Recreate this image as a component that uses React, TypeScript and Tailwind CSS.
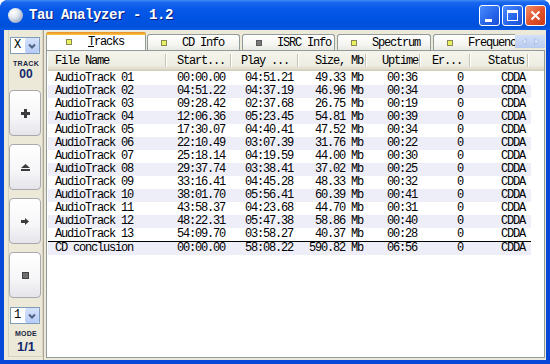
import React from "react";

const rows: [string, string, string, string, string][] = [
  ["AudioTrack 01", "00:00.00", "04:51.21", "49.33 Mb", "00:36"],
  ["AudioTrack 02", "04:51.22", "04:37.19", "46.96 Mb", "00:34"],
  ["AudioTrack 03", "09:28.42", "02:37.68", "26.75 Mb", "00:19"],
  ["AudioTrack 04", "12:06.36", "05:23.45", "54.81 Mb", "00:39"],
  ["AudioTrack 05", "17:30.07", "04:40.41", "47.52 Mb", "00:34"],
  ["AudioTrack 06", "22:10.49", "03:07.39", "31.76 Mb", "00:22"],
  ["AudioTrack 07", "25:18.14", "04:19.59", "44.00 Mb", "00:30"],
  ["AudioTrack 08", "29:37.74", "03:38.41", "37.02 Mb", "00:25"],
  ["AudioTrack 09", "33:16.41", "04:45.28", "48.33 Mb", "00:32"],
  ["AudioTrack 10", "38:01.70", "05:56.41", "60.39 Mb", "00:41"],
  ["AudioTrack 11", "43:58.37", "04:23.68", "44.70 Mb", "00:31"],
  ["AudioTrack 12", "48:22.31", "05:47.38", "58.86 Mb", "00:40"],
  ["AudioTrack 13", "54:09.70", "03:58.27", "40.37 Mb", "00:28"],
];

function Combo({ value }: { value: string }) {
  return (
    <div className="ml-[1px] w-[30px] h-[17px] bg-white border border-[#7f9db9] flex items-center">
      <span className="flex-1 pl-[3px] text-[12px] leading-[15px] text-black font-['Liberation_Mono',monospace]">{value}</span>
      <div className="w-[14px] h-[15px] bg-[linear-gradient(to_bottom,#d4e1fb,#b6cbf7)] rounded-[2px] flex items-center justify-center">
        <svg width="8" height="6" viewBox="0 0 8 6">
          <path d="M1 1.5 L4 4.5 L7 1.5" stroke="#4d6185" strokeWidth="2" fill="none" />
        </svg>
      </div>
    </div>
  );
}

function SideButton({ children }: { children: React.ReactNode }) {
  return (
    <div className="w-[32px] h-[46px] rounded-[4px] border border-[#a9a8ad] bg-[linear-gradient(to_bottom,#ffffff_0%,#f6f6f8_60%,#e4e4ea_100%)] flex items-center justify-center">
      {children}
    </div>
  );
}

function TabSquare({ gray }: { gray?: boolean }) {
  return (
    <div
      className={
        gray
          ? "w-[6px] h-[6px] shrink-0 bg-[#7a7a7a] border border-[#5a5a5a]"
          : "w-[6px] h-[6px] shrink-0 bg-[#e6f264] border border-[#8a8a50]"
      }
    />
  );
}

function Tab({ label, w, gray, ml }: { label: string; w: string; gray?: boolean; ml: string }) {
  return (
    <div
      className={`${w} ${ml} shrink-0 h-[16px] mt-[2px] border border-b-0 border-[#919b9c] rounded-t-[3px] bg-[linear-gradient(to_bottom,#ffffff,#f3f3ef_70%,#e9e8e0)] flex items-center pl-[13px]`}
    >
      <TabSquare gray={gray} />
      <span className="ml-[15px] whitespace-nowrap">{label}</span>
    </div>
  );
}

const cols = ["w-[119px]", "w-[65px]", "w-[67px]", "w-[68px]", "w-[54px]", "w-[50px]", "w-[58px]"];

function HeaderCell({ label, w, pl }: { label: string; w: string; pl: string }) {
  return (
    <div className={`${w} ${pl} shrink-0 h-full flex items-center relative`}>
      <span className="whitespace-nowrap">{label}</span>
      <div className="absolute right-0 top-[3px] bottom-[4px] w-[2px] border-l border-[#c7c5b2] border-r border-r-white" />
    </div>
  );
}

function Row({ r, striped, total }: { r: [string, string, string, string, string]; striped: boolean; total?: boolean }) {
  return (
    <div
      className={`flex w-[483px] leading-[13px] ${striped ? "bg-[#eeeef9]" : "bg-white"} ${
        total ? "border-t border-black h-[14px]" : "h-[13px]"
      }`}
    >
      <div className={`${cols[0]} pl-[7px] whitespace-nowrap`}>{r[0]}</div>
      <div className={`${cols[1]} pr-[7px] text-right`}>{r[1]}</div>
      <div className={`${cols[2]} pr-[6px] text-right`}>{r[2]}</div>
      <div className={`${cols[3]} pr-[4px] text-right whitespace-nowrap`}>{r[3]}</div>
      <div className={`${cols[4]} pr-[4px] text-right`}>{r[4]}</div>
      <div className={`${cols[5]} pr-[8px] text-right`}>0</div>
      <div className={`${cols[6]} pr-[4px] text-right`}>CDDA</div>
    </div>
  );
}

export default function App() {
  return (
    <div className="w-[550px] h-[364px] bg-white">
      <div className="w-[550px] h-[364px] rounded-t-[8px] bg-[#0848d8] flex flex-col overflow-hidden font-['Liberation_Mono',monospace] text-[12px] tracking-[-1.2px] text-black">
        {/* Title bar */}
        <div className="h-[30px] shrink-0 flex items-center bg-[linear-gradient(to_bottom,#3f8af5_0%,#1a68f0_8%,#0758e8_30%,#0054e3_60%,#0050da_88%,#0a5be6_100%)]">
          <div className="ml-[8px] w-[15px] h-[15px] rounded-full bg-[radial-gradient(circle_at_35%_30%,#ffffff_0%,#e4e8f0_35%,#9aa8c4_80%,#6f80a8_100%)]" />
          <div className="ml-[6px] flex-1 text-white font-bold text-[14px] tracking-[-0.4px] [text-shadow:1px_1px_0_#0a1a80] whitespace-nowrap">
            Tau Analyzer - 1.2
          </div>
          <div className="flex gap-[2px] mr-[4px] mt-[1px]">
            <div className="w-[21px] h-[21px] rounded-[3px] border border-white bg-[linear-gradient(135deg,#4c8cff,#2563e8_60%,#1c4fd8)] relative">
              <div className="absolute left-[5px] top-[13px] w-[7px] h-[3px] bg-white" />
            </div>
            <div className="w-[21px] h-[21px] rounded-[3px] border border-white bg-[linear-gradient(135deg,#4c8cff,#2563e8_60%,#1c4fd8)] relative">
              <div className="absolute left-[4px] top-[4px] w-[11px] h-[11px] border border-white border-t-[3px]" />
            </div>
            <div className="w-[21px] h-[21px] rounded-[3px] border border-white bg-[linear-gradient(135deg,#f0906a,#e0502a_55%,#c83a18)] flex items-center justify-center">
              <svg width="11" height="11" viewBox="0 0 11 11">
                <path d="M1.5 1.5 L9.5 9.5 M9.5 1.5 L1.5 9.5" stroke="white" strokeWidth="2" />
              </svg>
            </div>
          </div>
        </div>

        {/* Client area */}
        <div className="flex-1 mx-[4px] mb-[4px] bg-[#ece9d8] flex min-h-0">
          {/* Left panel */}
          <div className="w-[40px] shrink-0 pl-[4px] pb-[3px] border-r border-[#aca899]">
            <div className="h-full border border-t-0 border-[#d6d2c2] flex flex-col items-start font-['Liberation_Sans',sans-serif] tracking-normal">
              <div className="mt-[7px]">
                <Combo value="X" />
              </div>
              <div className="w-[34px] mt-[6px] text-center text-[7px] leading-[7px] font-bold text-[#1a2440] tracking-[0.3px]">TRACK</div>
              <div className="w-[34px] mt-[2px] text-center text-[12px] leading-[11px] font-bold text-[#13286c]">00</div>
              <div className="mt-[10px] flex flex-col gap-[8px]">
                <SideButton>
                  <svg width="9" height="9" viewBox="0 0 9 9">
                    <path d="M3 0 H6 V3 H9 V6 H6 V9 H3 V6 H0 V3 H3 Z" fill="#3c3c3c" />
                  </svg>
                </SideButton>
                <SideButton>
                  <svg width="9" height="7" viewBox="0 0 9 7">
                    <path d="M4.5 0 L9 4 H0 Z" fill="#3c3c3c" />
                    <rect x="0" y="5" width="9" height="2" fill="#3c3c3c" />
                  </svg>
                </SideButton>
                <SideButton>
                  <svg width="8" height="7" viewBox="0 0 8 7">
                    <path d="M0 2 H4 V0 L8 3.5 L4 7 V5 H0 Z" fill="#3c3c3c" />
                  </svg>
                </SideButton>
                <SideButton>
                  <div className="w-[7px] h-[7px] bg-[#6e6e6e] border border-[#444]" />
                </SideButton>
              </div>
              <div className="mt-[9px]">
                <Combo value="1" />
              </div>
              <div className="w-[34px] mt-[6px] text-center text-[7px] leading-[7px] font-bold text-[#1a2440] tracking-[0.3px]">MODE</div>
              <div className="w-[34px] mt-[3px] text-center text-[13px] leading-[13px] font-bold text-[#13286c]">1/1</div>
            </div>
          </div>

          {/* Right area */}
          <div className="flex-1 min-w-0 flex flex-col pl-[2px] pr-[1px] pt-[2px] pb-[2px]">
            {/* Tabs */}
            <div className="h-[18px] shrink-0 flex relative z-10">
              <div className="flex-1 min-w-0 flex overflow-hidden">
                <div className="w-[100px] shrink-0 h-[19px] bg-white border border-b-0 border-[#919b9c] rounded-t-[3px] relative flex items-center pl-[19px]">
                  <div className="absolute left-[-1px] right-[-1px] top-[-1px] h-[3px] rounded-t-[3px] bg-[linear-gradient(to_bottom,#e68b2c,#ffc73c)]" />
                  <TabSquare />
                  <span className="ml-[16px] whitespace-nowrap">
                    <span className="underline">T</span>racks
                  </span>
                </div>
                <Tab label="CD Info" w="w-[93px]" ml="ml-[1px]" />
                <Tab label="ISRC Info" w="w-[93px]" ml="ml-[2px]" gray />
                <Tab label="Spectrum" w="w-[94px]" ml="ml-[2px]" />
                <Tab label="Frequenc" w="w-[94px]" ml="ml-[2px]" />
              </div>
              <div className="w-[30px] h-[13px] mt-[3px] shrink-0 bg-[linear-gradient(to_bottom,#d3e0f8,#b8cbf0)] flex items-center justify-around px-[3px]">
                <svg width="5" height="7" viewBox="0 0 5 7">
                  <path d="M4 0.5 L1 3.5 L4 6.5 Z" fill="#f4f7ff" stroke="#8ea6d4" strokeWidth="0.6" />
                </svg>
                <svg width="5" height="7" viewBox="0 0 5 7">
                  <path d="M1 0.5 L4 3.5 L1 6.5 Z" fill="#f4f7ff" stroke="#8ea6d4" strokeWidth="0.6" />
                </svg>
              </div>
            </div>

            {/* Content */}
            <div className="flex-1 min-h-0 border border-[#919b9c] bg-white pl-[1px] flex flex-col">
              <div className="h-[20px] shrink-0 flex bg-[linear-gradient(to_bottom,#f5f4ec,#eeede2_70%,#e2dfcf_88%,#cdc9ba)]">
                <HeaderCell label="File Name" w={cols[0]} pl="pl-[7px]" />
                <HeaderCell label="Start..." w={cols[1]} pl="pl-[10px]" />
                <HeaderCell label="Play ..." w={cols[2]} pl="pl-[9px]" />
                <HeaderCell label="Size, Mb" w={cols[3]} pl="pl-[16px]" />
                <HeaderCell label="Uptime" w={cols[4]} pl="pl-[15px]" />
                <HeaderCell label="Er..." w={cols[5]} pl="pl-[11px]" />
                <HeaderCell label="Status" w={cols[6]} pl="pl-[17px]" />
                <div className="flex-1" />
              </div>
              <div className="pt-[1px] flex flex-col">
                {rows.map((r, i) => (
                  <Row key={r[0]} r={r} striped={i % 2 === 1} />
                ))}
                <Row r={["CD conclusion", "00:00.00", "58:08.22", "590.82 Mb", "06:56"]} striped total />
              </div>
            </div>
          </div>
        </div>
      </div>
    </div>
  );
}
